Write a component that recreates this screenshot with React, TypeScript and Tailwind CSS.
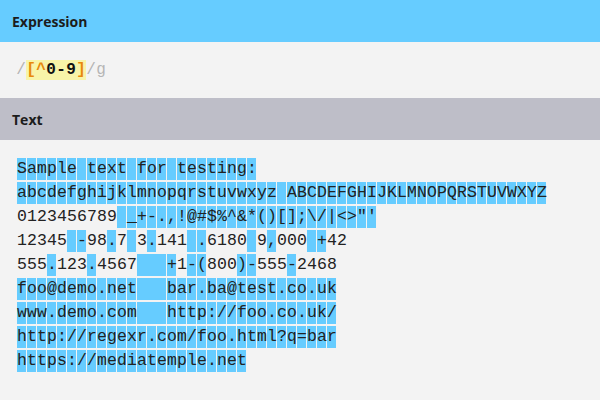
import React from "react";

const lines = [
  "Sample text for testing:",
  "abcdefghijklmnopqrstuvwxyz ABCDEFGHIJKLMNOPQRSTUVWXYZ",
  "0123456789 _+-.,!@#$%^&*()[];\\/|<>\"'",
  "12345 -98.7 3.141 .6180 9,000 +42",
  "555.123.4567\t+1-(800)-555-2468",
  "foo@demo.net\tbar.ba@test.co.uk",
  "www.demo.com\thttp://foo.co.uk/",
  "http://regexr.com/foo.html?q=bar",
  "https://mediatemple.net",
];

const mono = { fontFamily: '"Liberation Mono", "DejaVu Sans Mono", monospace' };

function Cell({ ch }: { ch: string }) {
  const isDigit = /[0-9]/.test(ch);
  if (ch === "\t") {
    return <span className="inline-block w-[30px] h-[22px] bg-[#66ccff] border-r border-[#f3f3f3]" />;
  }
  if (isDigit) {
    return (
      <span className="inline-block w-[10px] h-[22px] leading-[22px] text-center">{ch}</span>
    );
  }
  return (
    <span className="inline-block w-[10px] h-[22px] leading-[22px] bg-[#66ccff] border-r border-[#f3f3f3] whitespace-pre">
      <span className="inline-block w-[9px] text-center overflow-visible">{ch === " " ? "\u00a0" : ch}</span>
    </span>
  );
}

export default function App() {
  return (
    <div className="w-[600px] h-[400px] bg-[#f3f3f3] flex flex-col overflow-hidden">
      <div
        className="h-[42px] bg-[#66ccff] flex items-center px-3 text-[14px] font-bold text-[#1c1c1c]"
        style={{ fontFamily: '"Open Sans", sans-serif' }}
      >
        Expression
      </div>
      <div className="h-[56px] flex items-center px-4 text-[16px]" style={mono}>
        <span className="w-[10px] text-center text-[#b5b5b5]">/</span>
        <span className="flex bg-[#f8f4a8] h-[20px] items-center">
          <span className="w-[10px] text-center text-[#e8890c] font-bold">[</span>
          <span className="w-[10px] text-center text-[#e8890c] font-bold">^</span>
          <span className="w-[10px] text-center text-[#111] font-bold">0</span>
          <span className="w-[10px] text-center text-[#111] font-bold">-</span>
          <span className="w-[10px] text-center text-[#111] font-bold">9</span>
          <span className="w-[10px] text-center text-[#e8890c] font-bold">]</span>
        </span>
        <span className="w-[10px] text-center text-[#b5b5b5]">/</span>
        <span className="w-[10px] text-center text-[#b5b5b5]">g</span>
      </div>
      <div
        className="h-[42px] bg-[#bebec8] flex items-center px-3 text-[14px] font-bold text-[#1c1c1c]"
        style={{ fontFamily: '"Open Sans", sans-serif' }}
      >
        Text
      </div>
      <div className="pt-[18px] pl-[17px] text-[16.5px] text-[#222]" style={mono}>
        {lines.map((line, i) => (
          <div key={i} className="flex h-[24px] items-start">
            {Array.from(line).map((ch, j) => (
              <Cell key={j} ch={ch} />
            ))}
          </div>
        ))}
      </div>
    </div>
  );
}
